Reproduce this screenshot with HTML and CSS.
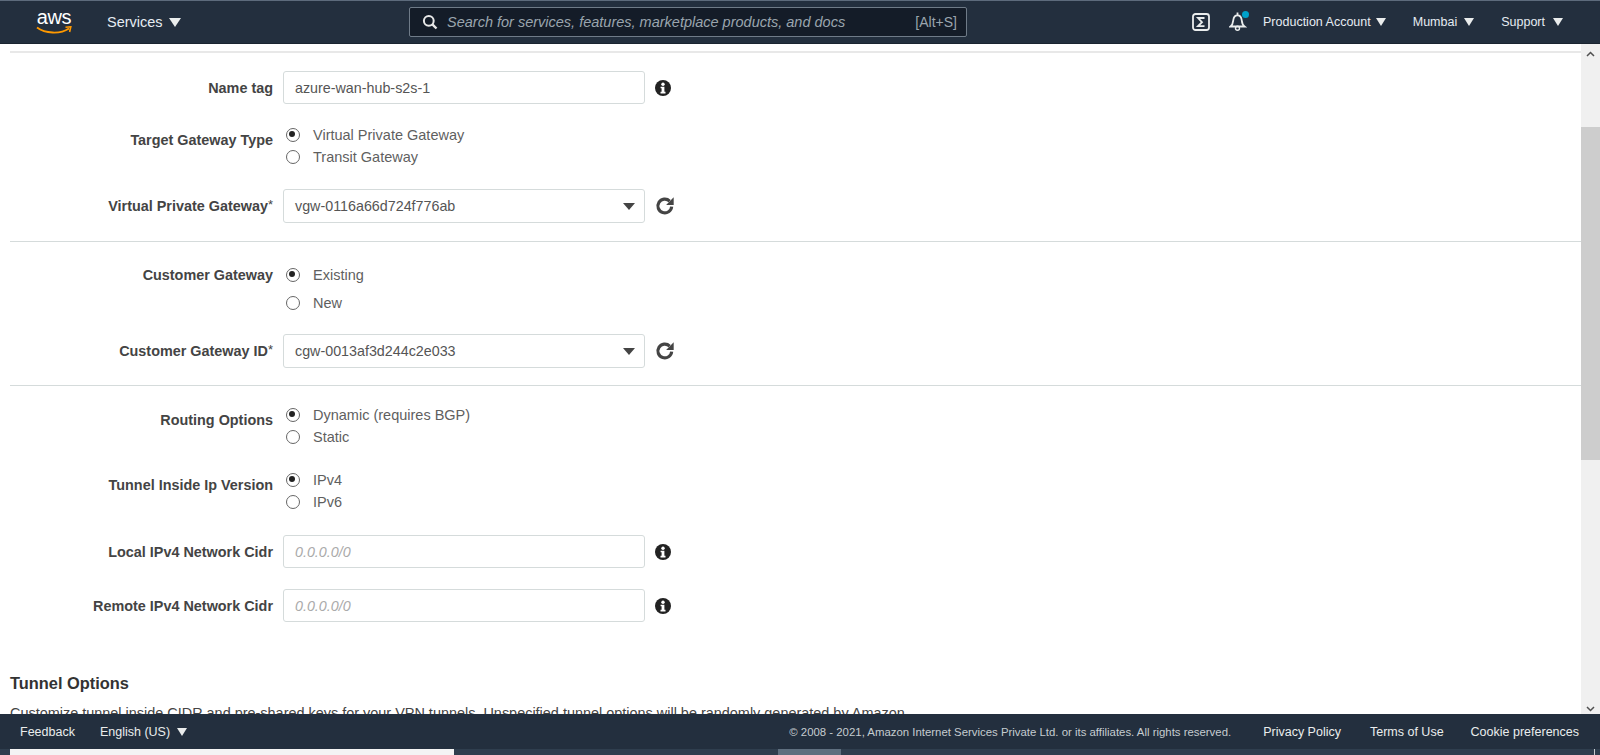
FILE: index.html
```html
<!DOCTYPE html>
<html lang="en">
<head>
<meta charset="utf-8">
<title>Create VPN Connection</title>
<link rel="stylesheet" href="styles.css">
</head>
<body>
<div class="app">
  <header class="topbar">
    <a class="logo"><span class="logo-text">aws</span>
      <svg class="smile" width="36" height="9" viewBox="0 0 36 9"><path d="M1 1.5C9 7.5 24 8.5 33 2.5" fill="none" stroke="#f90" stroke-width="1.8"/><path d="M29.5 1.2L34.8 .8L33.6 6" fill="none" stroke="#f90" stroke-width="1.6"/></svg>
    </a>
    <span class="nav services">Services<i class="caret big"></i></span>
    <div class="search">
      <svg class="search-icon" width="16" height="16" viewBox="0 0 16 16"><circle cx="6.8" cy="6.8" r="4.9" fill="none" stroke="#e8e8e8" stroke-width="2"/><path d="M10.4 10.4L14.5 14.5" stroke="#e8e8e8" stroke-width="2.4"/></svg>
      <span class="search-text">Search for services, features, marketplace products, and docs</span>
      <span class="search-key">[Alt+S]</span>
    </div>
    <div class="top-right">
      <svg class="shell" width="18" height="18" viewBox="0 0 18 18"><rect x="1" y="1" width="16" height="16" rx="2.5" fill="none" stroke="#eaeded" stroke-width="1.8"/><path d="M12.5 5H6l4 4.2L6 13.2h6.500" fill="none" stroke="#eaeded" stroke-width="1.8"/></svg>
      <span class="bell-wrap">
        <svg width="18" height="20" viewBox="0 0 18 20"><path d="M1.500 15.500c2.500-1.800 2.500-4 2.800-6.500C4.700 6 6.500 4.300 8.500 4.300S12.300 6 12.700 9c.3 2.500.3 4.700 2.800 6.500z" fill="none" stroke="#eaeded" stroke-width="1.800"/><path d="M8.500 1.500v2.500" stroke="#eaeded" stroke-width="1.800"/><circle cx="8.500" cy="17.300" r="2" fill="none" stroke="#eaeded" stroke-width="1.400"/></svg>
        <i class="bell-dot"></i>
      </span>
      <span class="nav small account">Production Account<i class="caret"></i></span>
      <span class="nav small region">Mumbai<i class="caret"></i></span>
      <span class="nav small support">Support<i class="caret"></i></span>
    </div>
  </header>

  <div class="body-row">
    <main class="content">
      <hr class="rule rule-top">
      <div class="row row-name">
        <label class="lbl">Name tag</label>
        <div class="box"><span class="value">azure-wan-hub-s2s-1</span></div>
        <svg class="side-icon" width="16" height="16" viewBox="0 0 16 16"><use href="#info"/></svg>
      </div>
      <div class="row row-radio row-target">
        <label class="lbl lbl-radio">Target Gateway Type</label>
        <div class="radios">
          <div class="radio on">Virtual Private Gateway</div>
          <div class="radio">Transit Gateway</div>
        </div>
      </div>
      <div class="row row-vgw">
        <label class="lbl">Virtual Private Gateway<sup class="req">*</sup></label>
        <div class="box select"><span class="value">vgw-0116a66d724f776ab</span><i class="select-caret"></i></div>
        <svg class="side-icon refresh" width="20" height="20" viewBox="0 0 18 18"><use href="#refresh"/></svg>
      </div>
      <hr class="rule rule-1">
      <div class="row row-radio row-cgw">
        <label class="lbl">Customer Gateway</label>
        <div class="radios wide">
          <div class="radio on">Existing</div>
          <div class="radio">New</div>
        </div>
      </div>
      <div class="row row-cgwid">
        <label class="lbl">Customer Gateway ID<sup class="req">*</sup></label>
        <div class="box select"><span class="value">cgw-0013af3d244c2e033</span><i class="select-caret"></i></div>
        <svg class="side-icon refresh" width="20" height="20" viewBox="0 0 18 18"><use href="#refresh"/></svg>
      </div>
      <hr class="rule rule-2">
      <div class="row row-radio row-routing">
        <label class="lbl lbl-radio">Routing Options</label>
        <div class="radios">
          <div class="radio on">Dynamic (requires BGP)</div>
          <div class="radio">Static</div>
        </div>
      </div>
      <div class="row row-radio row-ip">
        <label class="lbl lbl-radio">Tunnel Inside Ip Version</label>
        <div class="radios">
          <div class="radio on">IPv4</div>
          <div class="radio">IPv6</div>
        </div>
      </div>
      <div class="row row-local">
        <label class="lbl">Local IPv4 Network Cidr</label>
        <div class="box"><span class="placeholder">0.0.0.0/0</span></div>
        <svg class="side-icon" width="16" height="16" viewBox="0 0 16 16"><use href="#info"/></svg>
      </div>
      <div class="row row-remote">
        <label class="lbl">Remote IPv4 Network Cidr</label>
        <div class="box"><span class="placeholder">0.0.0.0/0</span></div>
        <svg class="side-icon" width="16" height="16" viewBox="0 0 16 16"><use href="#info"/></svg>
      </div>
      <h2 class="section-title">Tunnel Options</h2>
      <p class="section-text">Customize tunnel inside CIDR and pre-shared keys for your VPN tunnels. Unspecified tunnel options will be randomly generated by Amazon.</p>
    </main>
    <aside class="scrollbar">
      <svg class="arrow" width="9" height="6" viewBox="0 0 9 6"><path d="M1 5l3.500-3.500L8 5" fill="none" stroke="#505050" stroke-width="1.500"/></svg>
      <div class="thumb-gap"></div>
      <div class="thumb"></div>
      <div class="track-rest"></div>
      <svg class="arrow" width="9" height="6" viewBox="0 0 9 6"><path d="M1 1l3.500 3.500L8 1" fill="none" stroke="#505050" stroke-width="1.500"/></svg>
    </aside>
  </div>

  <footer class="footer">
    <span class="foot-link feedback">Feedback</span>
    <span class="foot-link lang">English (US)<i class="caret"></i></span>
    <span class="copy">© 2008 - 2021, Amazon Internet Services Private Ltd. or its affiliates. All rights reserved.</span>
    <span class="foot-link privacy">Privacy Policy</span>
    <span class="foot-link terms">Terms of Use</span>
    <span class="foot-link cookie">Cookie preferences</span>
  </footer>

  <div class="taskbar">
    <div class="task-window"></div>
    <div class="task-gap"></div>
    <div class="task-active"></div>
    <div class="task-rest"></div>
    <div class="task-edge"></div>
  </div>
</div>

<svg class="defs" width="0" height="0">
  <defs>
    <symbol id="info" viewBox="0 0 16 16">
      <circle cx="8" cy="8" r="8" fill="#222"/>
      <circle cx="8" cy="4.200" r="1.700" fill="#fff"/>
      <path d="M5.600 6.800h3.800v5h1.100v1.600H5.500v-1.600h1.100V8.300h-1z" fill="#fff"/>
    </symbol>
    <symbol id="refresh" viewBox="0 0 18 18">
      <path d="M15 9.500A6.200 6.200 0 1 1 13.200 4.600" fill="none" stroke="#444" stroke-width="2.800"/>
      <path d="M16.800 1.200v6.800h-6.800z" fill="#444"/>
    </symbol>
  </defs>
</svg>
</body>
</html>
```
FILE: styles.css
```css
* { box-sizing: border-box; }
html, body { margin: 0; height: 100%; overflow: hidden; }
body { font-family: "Liberation Sans", Arial, sans-serif; font-size: 14px; color: #444; background: #fff; }
.app { height: 755px; display: flex; flex-direction: column; }
.defs { display: block; height: 0; }

.topbar { height: 44px; flex: none; display: flex; align-items: center; background: #232f3e; border-top: 1px solid #5d6b7c; border-bottom: 1px solid #1a2430; color: #fff; padding-left: 36px; }
.logo { width: 36px; height: 30px; display: flex; flex-direction: column; align-items: center; position: relative; margin-right: 35px; }
.logo-text { font-family: "Liberation Sans", Arial, sans-serif; font-size: 20px; line-height: 19px; color: #fff; letter-spacing: -.3px; margin-top: 1px; }
.smile { margin-top: -1px; }
.nav { color: #e6ecf2; white-space: nowrap; display: inline-flex; align-items: center; }
.services { font-size: 14.500px; width: 302px; }
.small { font-size: 12.500px; }
.caret { display: inline-block; width: 0; height: 0; border-left: 5.500px solid transparent; border-right: 5.500px solid transparent; border-top: 8px solid #eaeded; margin-left: 7px; }
.caret.big { border-left-width: 6px; border-right-width: 6px; border-top-width: 9px; margin-left: 6px; }
.account .caret { margin-left: 5px; }
.support .caret { margin-left: 8px; }

.search { width: 558px; height: 30px; flex: none; display: flex; align-items: center; background: #141c28; border: 1px solid #6f7b88; border-radius: 2px; padding: 0 9px 0 12px; }
.search-icon { flex: none; margin-right: 9px; }
.search-text { flex: 1; font-style: italic; font-size: 14.500px; color: #9aa5ae; white-space: nowrap; }
.search-key { font-size: 14px; color: #9aa5ae; }

.top-right { margin-left: auto; display: flex; align-items: center; padding-right: 37px; }
.shell { margin-right: 19px; }
.bell-wrap { position: relative; display: flex; width: 20px; height: 22px; margin-right: 14px; }
.bell-dot { position: absolute; right: 0; top: 0; width: 7px; height: 7px; border-radius: 50%; background: #00a1c9; }
.account { margin-right: 27px; }
.region { margin-right: 27px; }

.body-row { flex: 1; min-height: 0; display: flex; }
.content { flex: 1; min-width: 0; overflow: hidden; padding: 7px 0 0 10px; }
.rule { border: 0; border-top: 1px solid #d5dbdb; margin: 0; }
.rule-top { border-top: 2px solid #e8e8e8; margin-bottom: 18px; }
.rule-1 { margin-top: 18px; margin-bottom: 25px; }
.rule-2 { margin-top: 17px; margin-bottom: 21px; }

.row { display: flex; align-items: center; }
.row-radio { align-items: flex-start; }
.lbl { width: 273px; flex: none; text-align: right; font-weight: 700; font-size: 14.400px; color: #444; padding-right: 10px; white-space: nowrap; }
.lbl-radio { padding-top: 5px; }
.req { font-weight: 400; font-size: 13px; line-height: 0; vertical-align: 2px; color: #444; }
.box { width: 362px; height: 33px; flex: none; display: flex; align-items: center; border: 1px solid #d5dbdb; border-radius: 3px; padding: 0 11px; background: #fff; }
.value { font-size: 14.300px; color: #555; }
.placeholder { font-size: 14.300px; font-style: italic; color: #aaa; }
.select { height: 34px; justify-content: space-between; padding-right: 9px; }
.select-caret { width: 0; height: 0; border-left: 6.500px solid transparent; border-right: 6.500px solid transparent; border-top: 7px solid #444; }
.side-icon { margin-left: 10px; flex: none; }
.refresh { margin-left: 10px; }

.radios { display: flex; flex-direction: column; gap: 6px; }
.radios.wide { gap: 12px; }
.radio { position: relative; padding-left: 30px; height: 16px; line-height: 16px; font-size: 14.500px; color: #5f5f5f; }
.radio::before { content: ""; position: absolute; left: 3px; top: 1px; width: 12px; height: 12px; border: 1px solid #666; border-radius: 50%; background: #fff; }
.radio.on::after { content: ""; position: absolute; left: 6px; top: 4px; width: 6px; height: 6px; border-radius: 50%; background: #222; }

.row-target { margin-top: 23px; }
.row-vgw { margin-top: 24px; }
.row-cgwid { margin-top: 23px; }
.row-ip { margin-top: 27px; }
.row-local { margin-top: 25px; }
.row-remote { margin-top: 21px; }
.section-title { font-size: 16.400px; font-weight: 700; color: #333; margin: 51px 0 0; line-height: 20px; }
.section-text { font-size: 14.450px; color: #444; margin: 10px 0 0; line-height: 20px; white-space: nowrap; }

.scrollbar { width: 19px; flex: none; background: #f0f0f0; display: flex; flex-direction: column; align-items: center; padding: 7px 0 2px; }
.arrow { flex: none; }
.thumb-gap { height: 70px; flex: none; }
.thumb { width: 100%; height: 333px; flex: none; background: #cdcdcd; }
.track-rest { flex: 1; }

.footer { height: 35px; flex: none; display: flex; align-items: center; background: #232f3e; color: #eaeded; padding: 0 21px 0 20px; }
.foot-link { font-size: 12.500px; color: #eaeded; white-space: nowrap; display: inline-flex; align-items: center; }
.feedback { margin-right: 25px; }
.lang .caret { margin-left: 7px; }
.copy { margin-left: auto; font-size: 11.400px; color: #c5ccd0; margin-right: 32px; white-space: nowrap; }
.terms { margin: 0 27px 0 29px; }

.taskbar { height: 6px; flex: none; display: flex; background: #2f3e4e; }
.task-window { width: 444px; margin-left: 10px; background: #f4f4f4; }
.task-gap { width: 324px; }
.task-active { width: 63px; background: #5f6f7f; }
.task-rest { flex: 1; }
.task-edge { width: 1px; margin-right: 5px; background: #c8ccd0; }
```
